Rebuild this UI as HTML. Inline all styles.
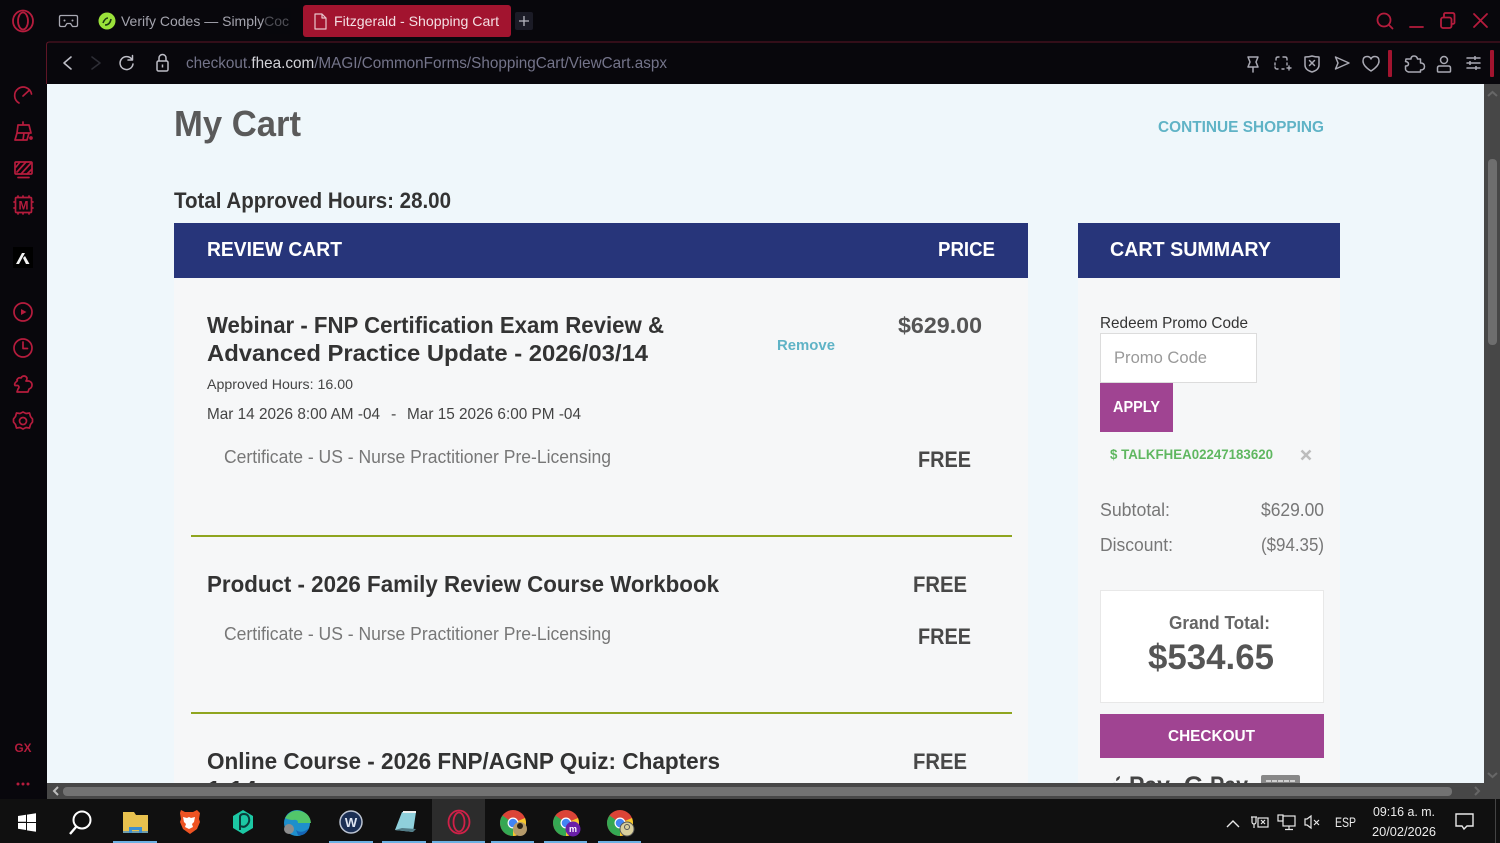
<!DOCTYPE html>
<html><head><meta charset="utf-8"><title>Fitzgerald - Shopping Cart</title>
<style>
html,body{margin:0;padding:0;background:#08070c;width:1500px;height:843px;overflow:hidden}
svg{display:block}
text{font-family:"Liberation Sans",sans-serif;white-space:pre}
.ic{fill:none;stroke:#b51c3d;stroke-width:1.7;stroke-linecap:round;stroke-linejoin:round}
.tb{fill:none;stroke:#a9a9b3;stroke-width:1.5;stroke-linecap:round;stroke-linejoin:round}
.tray{fill:none;stroke:#e8e8e8;stroke-width:1.2}
.t{font-weight:bold;font-size:23px;fill:#333}
.h{font-weight:bold;font-size:20px;fill:#fff}
.free{font-weight:bold;font-size:22px;fill:#484848}
.cert{font-size:18px;fill:#777}
.sum{font-size:18px;fill:#777}
</style></head><body>
<svg width="1500" height="843" viewBox="0 0 1500 843" xmlns="http://www.w3.org/2000/svg">
<rect width="1500" height="843" fill="#08070c"/>

<!-- top bar -->
<g fill="none" stroke="#b51c3d" stroke-width="1.8"><ellipse cx="23" cy="21" rx="10" ry="10.5"/><ellipse cx="23" cy="21" rx="5" ry="8.5"/></g>
<path d="M61 15.500h15q1.500 0 1.500 1.500v8q0 1.500-1.500 1.500h-3.500l-2-3h-3.500l-2 3h-4q-1.500 0-1.500-1.500v-8q0-1.500 1.500-1.500z" fill="none" stroke="#a9a9b3" stroke-width="1.300" stroke-linejoin="round"/>
<circle cx="64.500" cy="20.500" r="1" fill="#a9a9b3"/><circle cx="72.500" cy="20.500" r="1" fill="#a9a9b3"/>
<circle cx="107" cy="21" r="8.500" fill="#9ae23a"/><path d="M103 23q2-5 5-5m-3 7q5 0 6-6" fill="none" stroke="#1d3a12" stroke-width="1.600"/>
<text x="121" y="26" font-size="14" fill="#a4a4ae" textLength="168" lengthAdjust="spacingAndGlyphs">Verify Codes — SimplyCoc</text>
<rect x="265" y="8" width="26" height="26" fill="#08070c" opacity=".55"/>
<rect x="303" y="5" width="208" height="32" rx="3" fill="#a2142f"/>
<path d="M315 14h7l4 4v11h-11z M322 14v4h4" fill="none" stroke="#e9c4cc" stroke-width="1.200" stroke-linejoin="round"/>
<text x="334" y="26" font-size="14" fill="#f4dfe3" textLength="165" lengthAdjust="spacingAndGlyphs">Fitzgerald - Shopping Cart</text>
<rect x="515" y="12" width="18" height="18" rx="2" fill="#1b1b26"/>
<path d="M524 16v10M519 21h10" stroke="#b9b9c2" stroke-width="1.300"/>

<!-- window controls -->
<g fill="none" stroke="#b51c3d" stroke-width="1.800" stroke-linecap="round">
<circle cx="1384" cy="20" r="6.500"/><path d="M1389 25l3.500 3.500"/>
<path d="M1410 27h13"/>
<rect x="1441" y="17.500" width="10.500" height="10.500" rx="2"/><path d="M1444 17v-2.500q0-1.500 1.500-1.500h7q2 0 2 2v7.500q0 1.500-2.500 1.500"/>
<path d="M1474 14l13 13M1487 14l-13 13"/>
</g>

<!-- address bar frame -->
<path d="M46.500 84V45q0-3 3-3H1500" fill="none" stroke="#5e1526" stroke-width="1"/>
<path d="M71 57l-7 6 7 6" fill="none" stroke="#bdbdc6" stroke-width="1.600" stroke-linecap="round" stroke-linejoin="round"/>
<path d="M92 57l8 6-8 6" fill="none" stroke="#2d2d35" stroke-width="1.600" stroke-linecap="round" stroke-linejoin="round"/>
<path d="M132 59.500a6.500 6.500 0 1 0 1 4.500M132.500 55.500v4.500h-4.500" fill="none" stroke="#bdbdc6" stroke-width="1.500" stroke-linecap="round" stroke-linejoin="round"/>
<rect x="157" y="61" width="11" height="10" rx="1.500" fill="none" stroke="#bdbdc6" stroke-width="1.500"/>
<path d="M159 61v-3a3.500 3.500 0 0 1 7 0v3M162.500 64.500v3" fill="none" stroke="#bdbdc6" stroke-width="1.500"/>
<text x="186" y="68" font-size="16" textLength="481" lengthAdjust="spacingAndGlyphs" fill="#74748a">checkout.<tspan fill="#d2d2d8">fhea.com</tspan>/MAGI/CommonForms/ShoppingCart/ViewCart.aspx</text>

<!-- toolbar right -->
<g class="tb">
<path d="M1248 57h10l-2 5 2 5h-10l2-5zM1253 67v5"/>
<path d="M1276 60v-1q0-2 2-2h1m4 0h2q2 0 2 2v1m0 3v2m-12-2v2m0 2q0 2 2 2h1m4 0h2m5-3v4m-2-2h4" stroke-width="1.400"/>
<path d="M1305 57q4 0 7-1q3 1 7 1v8q0 5-7 7q-7-2-7-7zM1309.500 60.500l5 5M1314.500 60.500l-5 5"/>
<path d="M1335.500 57l13.500 6-13.500 6 2.500-6z"/>
<path d="M1371 71q-8-5-8-10q0-4.500 4-4.500q3 0 4 2.500q1-2.500 4-2.500q4 0 4 4.500q0 5-8 10z"/>
<path d="M1406 59h5q0-3 3-3t3.500 3h3v4q4 0 4 3.500t-4 3.500v2h-12q-3-1-3-3v-3q3 0 3-2t-3-2.500z"/>
<circle cx="1444" cy="60" r="3.500"/><path d="M1437.500 71v-3q0-2 2-2h9q2 0 2 2v3q0 1-1 1h-11q-1 0-1-1z"/>
<path d="M1467 58h13M1467 63h13M1467 68h13"/>
</g>
<path d="M1475 56v4M1470 61v4M1476 66v4" stroke="#a9a9b3" stroke-width="1.500"/>
<rect x="1388" y="50" width="4" height="27" rx="1" fill="#a2142f"/>
<rect x="1490" y="50" width="4" height="27" rx="1" fill="#a2142f"/>

<!-- page -->
<svg x="47" y="84" width="1438" height="699" viewBox="47 84 1438 699">
<rect x="47" y="84" width="1438" height="699" fill="#eff7fb"/>
<rect x="174" y="278" width="854" height="510" fill="#f6f7f8"/>
<rect x="1078" y="278" width="262" height="510" fill="#f6f7f8"/>
<text x="174" y="136" font-size="36" font-weight="bold" fill="#5a5a5a" textLength="127" lengthAdjust="spacingAndGlyphs">My Cart</text>
<text x="1158" y="132" font-size="15.500" font-weight="bold" fill="#5fb3c6" textLength="166" lengthAdjust="spacingAndGlyphs">CONTINUE SHOPPING</text>
<text x="174" y="208" font-size="22" font-weight="bold" fill="#333" textLength="277" lengthAdjust="spacingAndGlyphs">Total Approved Hours: 28.00</text>
<rect x="174" y="223" width="854" height="55" fill="#27357a"/>
<rect x="1078" y="223" width="262" height="55" fill="#27357a"/>
<text class="h" x="207" y="256" textLength="135" lengthAdjust="spacingAndGlyphs">REVIEW CART</text>
<text class="h" x="938" y="256" textLength="57" lengthAdjust="spacingAndGlyphs">PRICE</text>
<text class="h" x="1110" y="256" textLength="161" lengthAdjust="spacingAndGlyphs">CART SUMMARY</text>

<text class="t" x="207" y="333" textLength="457" lengthAdjust="spacingAndGlyphs">Webinar - FNP Certification Exam Review &amp;</text>
<text class="t" x="207" y="361" textLength="441" lengthAdjust="spacingAndGlyphs">Advanced Practice Update - 2026/03/14</text>
<text x="207" y="389" font-size="13.500" fill="#444" textLength="146" lengthAdjust="spacingAndGlyphs">Approved Hours: 16.00</text>
<text x="207" y="419" font-size="16" fill="#444" textLength="173" lengthAdjust="spacingAndGlyphs">Mar 14 2026 8:00 AM -04</text>
<text x="391" y="419" font-size="16" fill="#444">-</text>
<text x="407" y="419" font-size="16" fill="#444" textLength="174" lengthAdjust="spacingAndGlyphs">Mar 15 2026 6:00 PM -04</text>
<text class="cert" x="224" y="463" textLength="387" lengthAdjust="spacingAndGlyphs">Certificate - US - Nurse Practitioner Pre-Licensing</text>
<text x="777" y="350" font-size="15" font-weight="bold" fill="#5fb3c6" textLength="58" lengthAdjust="spacingAndGlyphs">Remove</text>
<text x="898" y="333" font-size="22" font-weight="bold" fill="#555" textLength="84" lengthAdjust="spacingAndGlyphs">$629.00</text>
<text class="free" x="918" y="467" textLength="53" lengthAdjust="spacingAndGlyphs">FREE</text>
<rect x="191" y="535" width="821" height="2" fill="#8fa51f"/>
<text class="t" x="207" y="592" textLength="512" lengthAdjust="spacingAndGlyphs">Product - 2026 Family Review Course Workbook</text>
<text class="free" x="913" y="592" textLength="54" lengthAdjust="spacingAndGlyphs">FREE</text>
<text class="cert" x="224" y="640" textLength="387" lengthAdjust="spacingAndGlyphs">Certificate - US - Nurse Practitioner Pre-Licensing</text>
<text class="free" x="918" y="644" textLength="53" lengthAdjust="spacingAndGlyphs">FREE</text>
<rect x="191" y="712" width="821" height="2" fill="#8fa51f"/>
<text class="t" x="207" y="769" textLength="513" lengthAdjust="spacingAndGlyphs">Online Course - 2026 FNP/AGNP Quiz: Chapters</text>
<text class="free" x="913" y="769" textLength="54" lengthAdjust="spacingAndGlyphs">FREE</text>
<text class="t" x="207" y="797" textLength="50" lengthAdjust="spacingAndGlyphs">1-14</text>

<text x="1100" y="328" font-size="16" fill="#333" textLength="148" lengthAdjust="spacingAndGlyphs">Redeem Promo Code</text>
<rect x="1100.500" y="333.500" width="156" height="49" fill="#fff" stroke="#dcdcdc"/>
<text x="1114" y="363" font-size="17" fill="#999" textLength="93" lengthAdjust="spacingAndGlyphs">Promo Code</text>
<rect x="1100" y="383" width="73" height="49" fill="#a04492"/>
<text x="1113" y="412" font-size="16" font-weight="bold" fill="#fff" textLength="47" lengthAdjust="spacingAndGlyphs">APPLY</text>
<text x="1110" y="459" font-size="14" font-weight="bold" fill="#5fb760" textLength="163" lengthAdjust="spacingAndGlyphs">$ TALKFHEA02247183620</text>
<path d="M1301.500 450.500l9 9M1310.500 450.500l-9 9" stroke="#bdbdbd" stroke-width="2.600"/>
<text class="sum" x="1100" y="516" textLength="70" lengthAdjust="spacingAndGlyphs">Subtotal:</text>
<text class="sum" x="1261" y="516" textLength="63" lengthAdjust="spacingAndGlyphs">$629.00</text>
<text class="sum" x="1100" y="551" textLength="73" lengthAdjust="spacingAndGlyphs">Discount:</text>
<text class="sum" x="1261" y="551" textLength="63" lengthAdjust="spacingAndGlyphs">($94.35)</text>
<rect x="1100.500" y="590.500" width="223" height="112" fill="#fff" stroke="#e8e8e8"/>
<text x="1169" y="629" font-size="18" font-weight="bold" fill="#666" textLength="101" lengthAdjust="spacingAndGlyphs">Grand Total:</text>
<text x="1148" y="669" font-size="35" font-weight="bold" fill="#555" textLength="126" lengthAdjust="spacingAndGlyphs">$534.65</text>
<rect x="1100" y="714" width="224" height="44" fill="#a04492"/>
<text x="1168" y="741" font-size="16" font-weight="bold" fill="#fff" textLength="87" lengthAdjust="spacingAndGlyphs">CHECKOUT</text>
<text x="1129" y="794" font-size="25" font-weight="bold" fill="#444" textLength="41" lengthAdjust="spacingAndGlyphs">Pay</text>
<path d="M1108 790q0-8 8-7q2 1 5 0l4 3q-4 3 0 10h-17zM1116 781q0-4 4-5q0 4-4 5z" fill="#444"/>
<text x="1184" y="794" font-size="25" font-weight="bold" fill="#444">G</text>
<text x="1210" y="794" font-size="25" font-weight="bold" fill="#444" textLength="38" lengthAdjust="spacingAndGlyphs">Pay</text>
<rect x="1261" y="775" width="39" height="20" rx="2" fill="#888"/>
<path d="M1266 781h29" stroke="#d0d0d0" stroke-width="2" stroke-dasharray="5 1"/>
</svg>

<!-- right scrollbar -->
<rect x="1484" y="84" width="16" height="699" fill="#474747"/>
<path d="M1488 96l4.500-4 4.500 4" fill="none" stroke="#676767" stroke-width="2"/>
<rect x="1488" y="159" width="9" height="186" rx="4" fill="#6e6e6e"/>
<path d="M1488 773l4.500 4 4.500-4" fill="none" stroke="#676767" stroke-width="2"/>
<!-- bottom scrollbar -->
<rect x="47" y="783" width="1453" height="16" fill="#474747"/>
<path d="M58 787l-4 4 4 4" fill="none" stroke="#bdbdbd" stroke-width="2"/>
<rect x="63" y="787" width="1389" height="9" rx="4" fill="#727272"/>
<path d="M1475 787l4 4-4 4" fill="none" stroke="#666" stroke-width="2"/>

<!-- sidebar -->
<g class="ic">
<path d="M19 103a8.500 8.500 0 1 1 12.500-9M23 96l6-5.500"/>
<path d="M18 125h11l2 8H17zM23 125v-3M17 133l-2 7h12l2-7M24 133l-1 7"/><circle cx="31" cy="138" r="1" fill="#b51c3d"/>
<rect x="15" y="162" width="17" height="12" rx="1"/><path d="M17 172l9-10M21 174l10-11M16 167l4-5M27 174l5-5M18 177.500h11"/>
<rect x="15.500" y="197.500" width="16" height="15" rx="1"/><path d="M18 196v1M23 196v1M29 196v1M18 213v1M23 213v1M29 213v1M14 202h1M14 208h1M32 202h1M32 208h1"/>
<circle cx="23" cy="312" r="9"/>
<circle cx="23" cy="348" r="9"/><path d="M23 342v6.500h4.500"/>
<path d="M17 380q1-3 4-2 1-2 3-2t3 2q0 2-1 3h3q3 1 3 4t-3 4l-1 3h-11l1-3q2-2 0-3.500h-3q-1-2 1-3.500t1-2.500z"/>
<path d="M23 412l3 1.500 3.500-.5 1 3.500 2 2.500v3l-2 2.500-1 3.500-3.500-.5-3 1.500-3-1.500-3.500.5-1-3.500-2-2.500v-3l2-2.500 1-3.500 3.500.5z"/><circle cx="23" cy="421" r="3.500"/>
</g>
<path d="M21 309l5.500 3-5.500 3z" fill="#b51c3d"/>
<text x="23.500" y="209.500" font-size="12" font-weight="bold" fill="#b51c3d" text-anchor="middle">M</text>
<rect x="13" y="247" width="20" height="21" fill="#000"/>
<path d="M16 264l6-11h3l-6 11zM23 258l3 6h3.500l-4.500-8z" fill="#f2f2f2"/>
<text x="23" y="752" font-size="11.500" font-weight="bold" fill="#b51c3d" text-anchor="middle" textLength="17" lengthAdjust="spacingAndGlyphs">GX</text>
<g fill="#b51c3d"><circle cx="18" cy="784" r="1.500"/><circle cx="23" cy="784" r="1.500"/><circle cx="28" cy="784" r="1.500"/></g>

<!-- taskbar -->
<rect x="0" y="799" width="1500" height="44" fill="#101010"/>
<rect x="432" y="799" width="53" height="44" fill="#2c2c2c"/>
<g fill="#6cb1e3"><rect x="113" y="841" width="44" height="2"/><rect x="329" y="841" width="44" height="2"/><rect x="382" y="841" width="44" height="2"/><rect x="432" y="841" width="53" height="2"/><rect x="491" y="841" width="43" height="2"/><rect x="544" y="841" width="43" height="2"/><rect x="598" y="841" width="43" height="2"/></g>
<path d="M18 816l8-1.200v7h-8zM27 814.600l9-1.300v8.700h-9zM18 823h8v7l-8-1.200zM27 823h9v8.700l-9-1.300z" fill="#fff"/>
<circle cx="82" cy="820" r="8.500" fill="none" stroke="#fff" stroke-width="2"/><path d="M76 827l-6 7" stroke="#fff" stroke-width="2.400"/>
<path d="M123 812h11l2 3h12v18h-25z" fill="#e8c14e"/><path d="M129 827h13v6h-3v-3h-7v3h-3z" fill="#3d8fd1"/><rect x="123" y="831" width="25" height="2" fill="#3d8fd1" opacity=".7"/>
<path d="M181 810l4 2h8l4-2 3 3-1 6 1 3-3 7-7 5-7-5-3-7 1-3-1-6z" fill="#ee5322"/><path d="M183 817l4 1 2-1 2 1 4-1-1 5-2 2 1 3-4 2-4-2 1-3-2-2z" fill="#fff"/>
<path d="M243 810l10 6v12l-10 6-10-6v-12z" fill="#1cc8a4"/><path d="M240 830v-13q0-3 4-3t5 4-2 7-6 1" fill="none" stroke="#0b3b39" stroke-width="2"/>
<circle cx="297" cy="823" r="13" fill="#1e8fcc"/><path d="M285 818q6-9 15-7 10 2 11 12h-13q0-4-5-3-4 0-8-2z" fill="#52c66a"/><path d="M296 830q5 4 12-1 1 0 0 1-3 6-10 5z" fill="#1565b5"/><circle cx="289" cy="829" r="5" fill="#8d8d8d"/>
<circle cx="351" cy="822" r="11" fill="#1b2f54" stroke="#bcc4d2" stroke-width="1.500"/><text x="351" y="827" font-size="13" font-weight="bold" fill="#dfe6f2" text-anchor="middle">W</text>
<path d="M395 830l7-18h14l-3 20z" fill="#8fd0dc"/><path d="M395 830l18 2 3-3-14-1z" fill="#527d88"/><path d="M403 812h13" stroke="#eee" stroke-width="2"/>
<g fill="none" stroke="#cf2148" stroke-width="1.800"><ellipse cx="459" cy="822" rx="10.500" ry="11.500"/><ellipse cx="459" cy="822" rx="5.500" ry="9.500"/></g>
<circle cx="513" cy="823" r="13" fill="#db4437"/><path d="M513 823l-12.500 3.500a13 13 0 0 1 2-11z" fill="#34a853"/><path d="M513 836a13 13 0 0 0 12-18l-12 5z" fill="#f6c92c"/><path d="M513 823l-12.500 3.500a13 13 0 0 0 12.500 9.500z" fill="#34a853"/><circle cx="513" cy="823" r="5.500" fill="#fff"/><circle cx="513" cy="823" r="4.300" fill="#4285f4"/>
<circle cx="520" cy="829" r="7" fill="#b59a6a"/><circle cx="520" cy="826" r="3" fill="#2b2418"/>
<circle cx="566" cy="823" r="13" fill="#db4437"/><path d="M566 823l-12.500 3.500a13 13 0 0 1 2-11z" fill="#34a853"/><path d="M566 836a13 13 0 0 0 12-18l-12 5z" fill="#f6c92c"/><path d="M566 823l-12.500 3.500a13 13 0 0 0 12.500 9.500z" fill="#34a853"/><circle cx="566" cy="823" r="5.500" fill="#fff"/><circle cx="566" cy="823" r="4.300" fill="#4285f4"/>
<circle cx="573" cy="829" r="7.500" fill="#6a1fa8"/><text x="573" y="832" font-size="9" font-weight="bold" fill="#fff" text-anchor="middle">m</text>
<circle cx="620" cy="823" r="13" fill="#db4437"/><path d="M620 823l-12.500 3.500a13 13 0 0 1 2-11z" fill="#34a853"/><path d="M620 836a13 13 0 0 0 12-18l-12 5z" fill="#f6c92c"/><path d="M620 823l-12.500 3.500a13 13 0 0 0 12.500 9.500z" fill="#34a853"/><circle cx="620" cy="823" r="5.500" fill="#fff"/><circle cx="620" cy="823" r="4.300" fill="#4285f4"/>
<circle cx="627" cy="829" r="7" fill="#d9cf9d" stroke="#555"/><circle cx="627" cy="827" r="2.500" fill="none" stroke="#555"/>

<!-- tray -->
<g class="tray">
<path d="M1227 827l6-6 6 6" stroke-width="1.400"/>
<path d="M1252 817v5a2 2 0 0 0 4 0v-5M1254 824v4M1251 817h6"/><rect x="1258" y="818" width="10" height="9"/><path d="M1261 820l4 4M1265 820l-4 4"/>
<rect x="1283" y="816" width="12" height="10"/><rect x="1278" y="815" width="5" height="6"/><path d="M1289 826v3M1285 829.500h8"/>
<path d="M1305 819h2l4-3v12l-4-3h-2zM1314 820l5 5M1319 820l-5 5"/>
<path d="M1456 814h17v12h-6l-3 3-2-3h-6z" stroke-width="1.400"/>
</g>
<text x="1335" y="827" font-size="14" fill="#ececec" textLength="21" lengthAdjust="spacingAndGlyphs">ESP</text>
<text x="1373" y="816" font-size="13" fill="#ececec" textLength="62" lengthAdjust="spacingAndGlyphs">09:16 a. m.</text>
<text x="1372" y="836" font-size="13" fill="#ececec" textLength="64" lengthAdjust="spacingAndGlyphs">20/02/2026</text>
<rect x="1495" y="799" width="1" height="44" fill="#444"/>
</svg>
</body></html>
